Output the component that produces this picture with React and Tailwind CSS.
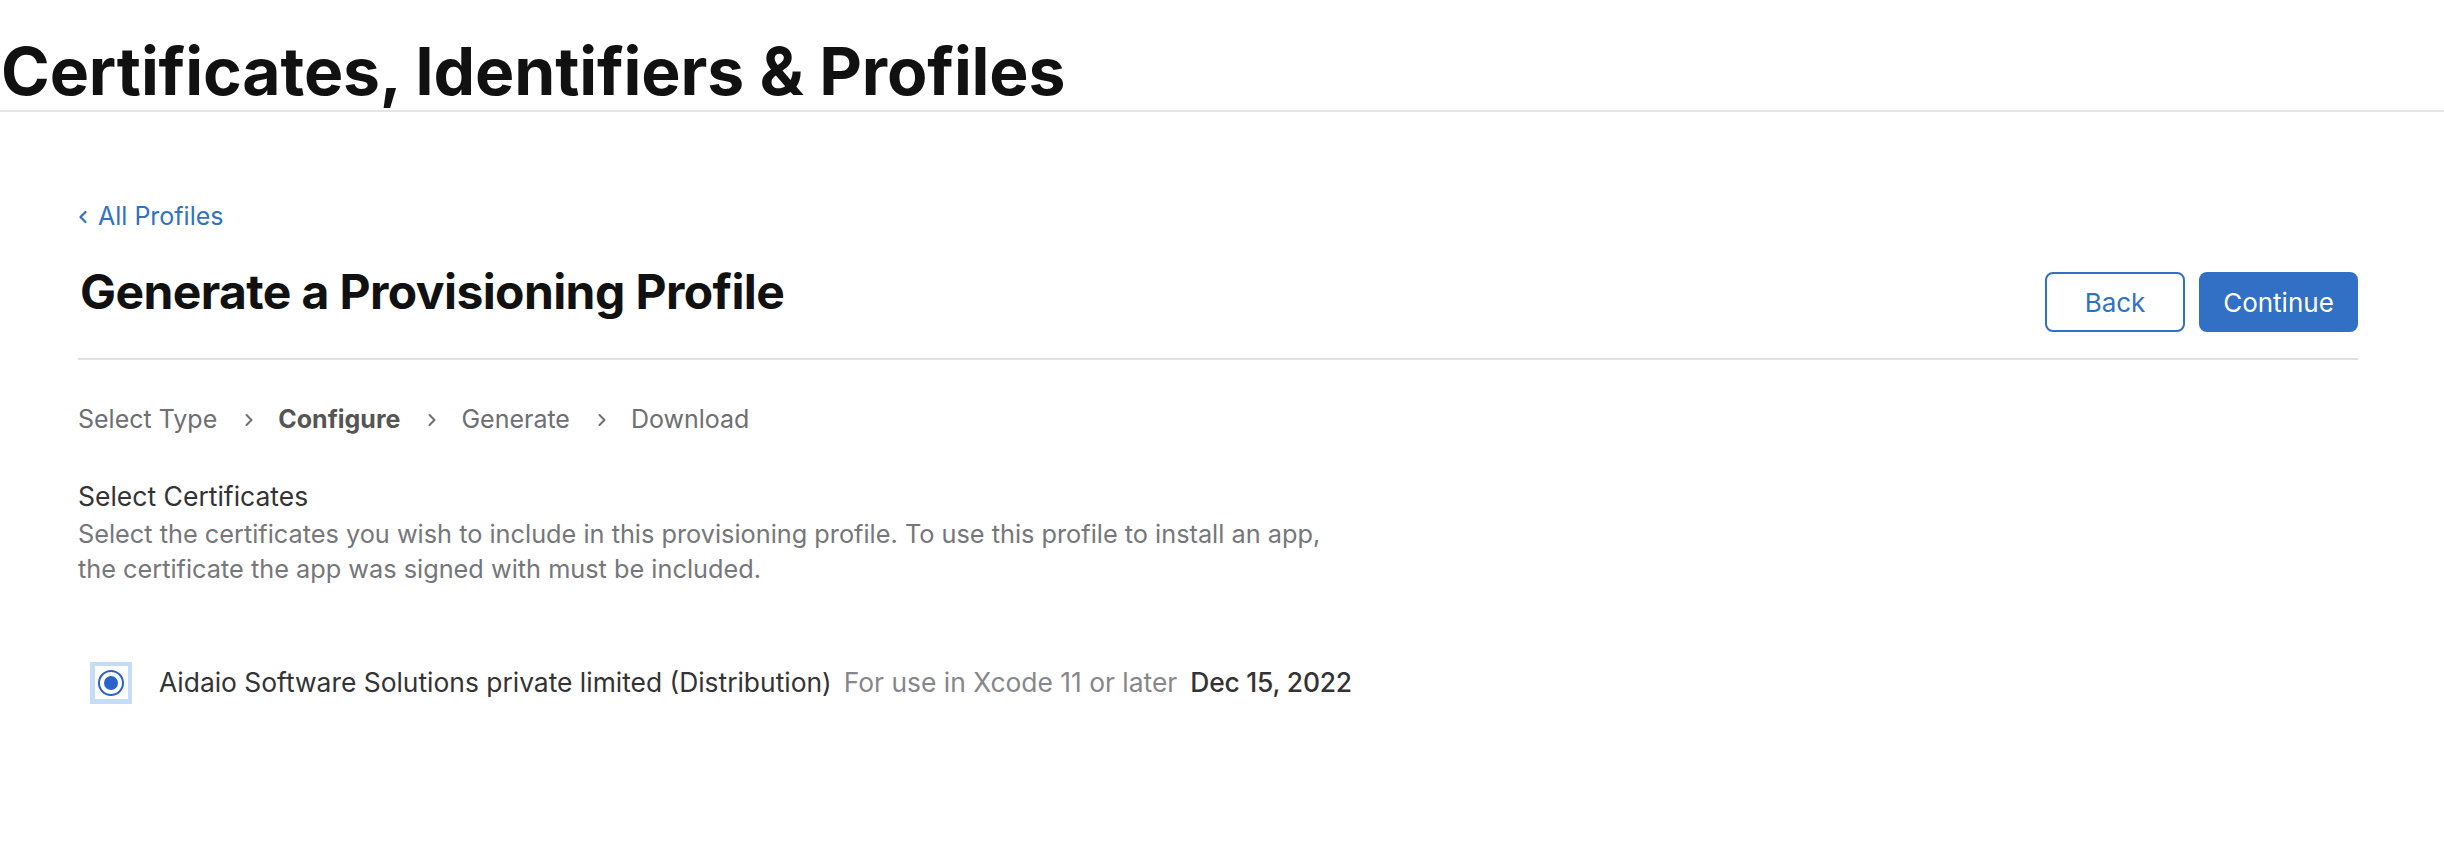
import React from "react";

function Chevron() {
  return (
    <svg width="10" height="16" viewBox="0 0 10 16" className="ml-[27px] mr-[24px] shrink-0">
      <path d="M2.5 3 L7.5 8 L2.5 13" fill="none" stroke="#6e6e73" strokeWidth="2" strokeLinecap="round" strokeLinejoin="round" />
    </svg>
  );
}

export default function App() {
  return (
    <div className="min-h-[868px] w-[2444px] bg-white font-['Inter','Liberation_Sans',sans-serif] text-[#1d1d1f]">
      <header className="h-[112px] border-b-2 border-[#e5e5e5] pt-[38px]">
        <h1 className="text-[66px] font-bold leading-none tracking-[-0.15px] text-[#111111] pl-[1px]">
          Certificates, Identifiers &amp; Profiles
        </h1>
      </header>

      <main className="pl-[78px] pr-[86px]">
        <a className="mt-[92px] flex items-center text-[25px] leading-none text-[#3171c5]">
          <svg width="10" height="16" viewBox="0 0 10 16" className="mr-[10px]">
            <path d="M7.5 3 L2.5 8 L7.5 13" fill="none" stroke="#3171c5" strokeWidth="2.2" strokeLinecap="round" strokeLinejoin="round" />
          </svg>
          All Profiles
        </a>

        <div className="mt-[39px] flex items-start justify-between">
          <h2 className="pl-[2px] text-[48px] font-bold leading-none tracking-[-0.6px] text-[#111111]">
            Generate a Provisioning Profile
          </h2>
          <div className="mt-[4px] flex gap-[14px]">
            <button className="h-[60px] w-[140px] rounded-[8px] border-2 border-[#3171c5] bg-white text-[26px] text-[#3171c5]">
              Back
            </button>
            <button className="h-[60px] w-[159px] rounded-[8px] bg-[#3170c5] text-[26px] text-white">
              Continue
            </button>
          </div>
        </div>

        <div className="mt-[26px] h-[2px] bg-[#e0e0e0]" />

        <div className="mt-[47px] flex items-center text-[25px] leading-none text-[#6e6e73]">
          <span>Select Type</span>
          <Chevron />
          <span className="font-bold text-[#555555]">Configure</span>
          <Chevron />
          <span>Generate</span>
          <Chevron />
          <span>Download</span>
        </div>

        <div className="mt-[51px] text-[26.5px] leading-none text-[#333336]">Select Certificates</div>
        <p className="mt-[6px] text-[25.3px] leading-[35px] text-[#76767b]">
          Select the certificates you wish to include in this provisioning profile. To use this profile to install an app,
          <br />
          the certificate the app was signed with must be included.
        </p>

        <div className="mt-[76px] flex items-center">
          <div className="ml-[12px] flex h-[42px] w-[42px] items-center justify-center bg-[#c5dcf9]">
            <div className="flex h-[33px] w-[33px] items-center justify-center bg-white">
              <div className="flex h-[26px] w-[26px] items-center justify-center rounded-full border-[2.5px] border-[#2a62c9]">
                <div className="h-[14px] w-[14px] rounded-full bg-[#2a62c9]" />
              </div>
            </div>
          </div>
          <div className="ml-[27px] flex items-center text-[26.4px] leading-none">
            <span className="text-[#333336]">Aidaio Software Solutions private limited (Distribution)</span>
            <span className="ml-[12px] text-[#86868b]">For use in Xcode 11 or later</span>
            <span className="ml-[13px] font-medium tracking-[-0.2px] text-[#333336]">Dec 15, 2022</span>
          </div>
        </div>
      </main>
    </div>
  );
}
